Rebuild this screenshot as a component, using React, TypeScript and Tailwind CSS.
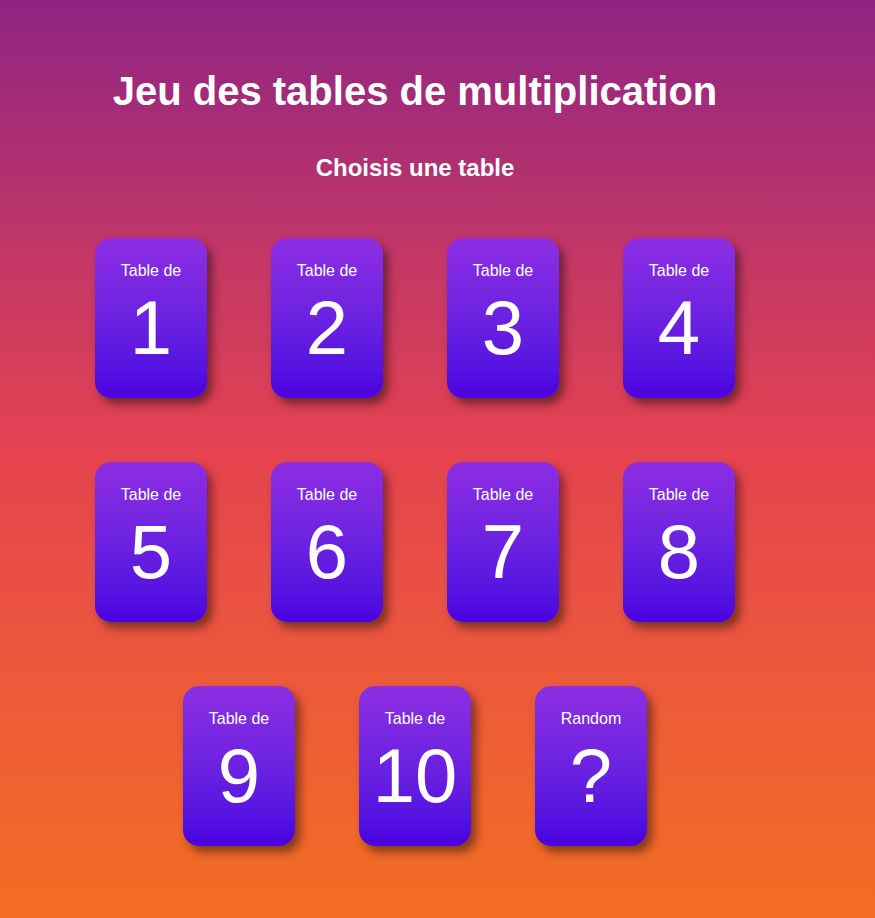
const tables = [1, 2, 3, 4, 5, 6, 7, 8, 9, 10];

function Card({ label, value }: { label: string; value: string }) {
  return (
    <button className="flex h-[160px] w-[112px] flex-col items-center rounded-[16px] bg-gradient-to-b from-[#8e2de2] to-[#4a00e0] text-white shadow-[5px_6px_10px_rgba(0,0,0,0.45)]">
      <span className="mt-[24px] text-[16px] leading-[18px]">{label}</span>
      <span className="mt-[8px] text-[76px] leading-[80px]">{value}</span>
    </button>
  );
}

export default function App() {
  return (
    <div
      className="min-h-screen w-full bg-[linear-gradient(180deg,#8f2483_0%,#c33766_28%,#e6434f_50%,#ec5a3a_75%,#f36e23_100%)]"
      style={{ fontFamily: '"Liberation Sans", Arial, Helvetica, sans-serif' }}
    >
      <div className="flex w-[830px] flex-col items-center pt-[67px]">
        <h1 className="text-[40px] font-bold leading-[48px] text-white">
          Jeu des tables de multiplication
        </h1>
        <h2 className="mt-[37px] text-[24px] font-bold leading-[32px] text-white">
          Choisis une table
        </h2>
        <div className="mt-[54px] flex w-[640px] flex-wrap justify-center gap-x-[64px] gap-y-[64px] pb-[72px]">
          {tables.map((n) => (
            <Card key={n} label="Table de" value={String(n)} />
          ))}
          <Card label="Random" value="?" />
        </div>
      </div>
    </div>
  );
}
